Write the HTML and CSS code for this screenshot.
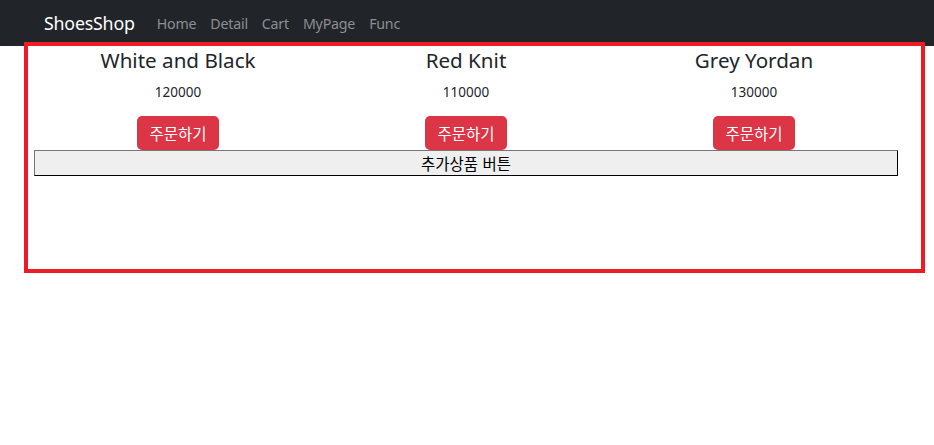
FILE: index.html
```html
<!DOCTYPE html>
<html lang="ko">
<head>
<meta charset="utf-8">
<title>ShoesShop</title>
<link rel="stylesheet" href="styles.css">
</head>
<body>
<nav class="navbar">
  <a class="brand" href="#">ShoesShop</a>
  <div class="nav-links">
    <a class="nav-link" href="#">Home</a>
    <a class="nav-link" href="#">Detail</a>
    <a class="nav-link" href="#">Cart</a>
    <a class="nav-link" href="#">MyPage</a>
    <a class="nav-link" href="#">Func</a>
  </div>
</nav>
<main class="main">
  <div class="row">
    <div class="col">
      <h4 class="title">White and Black</h4>
      <p class="price">120000</p>
      <button class="btn-order">주문하기</button>
    </div>
    <div class="col">
      <h4 class="title">Red Knit</h4>
      <p class="price">110000</p>
      <button class="btn-order">주문하기</button>
    </div>
    <div class="col">
      <h4 class="title">Grey Yordan</h4>
      <p class="price">130000</p>
      <button class="btn-order">주문하기</button>
    </div>
  </div>
  <button class="btn-more">추가상품 버튼</button>
</main>
<div class="highlight"></div>
</body>
</html>
```
FILE: styles.css
```css
html, body {
  margin: 0;
  padding: 0;
  background: #fff;
}
body {
  font-family: "Noto Sans", "Noto Sans CJK KR", sans-serif;
  color: #212529;
  position: relative;
  min-height: 445px;
}
.navbar {
  height: 46px;
  background: #212529;
  display: flex;
  align-items: center;
  padding-left: 44px;
  box-sizing: border-box;
}
.brand {
  color: #fff;
  text-decoration: none;
  font-size: 17.8px;
  margin-right: 15px;
  letter-spacing: -0.2px;
}
.nav-links {
  display: flex;
}
.nav-link {
  color: #8e8f91;
  text-decoration: none;
  font-size: 14.2px;
  padding: 0 7px;
  letter-spacing: -0.2px;
}
.main {
  width: 864px;
  margin-left: 34px;
}
.row {
  display: grid;
  grid-template-columns: repeat(3, 1fr);
}
.col {
  display: flex;
  flex-direction: column;
  align-items: center;
}
.title {
  margin: 2px 0 0;
  font-size: 20.6px;
  line-height: 25px;
  font-weight: 400;
  color: #212529;
}
.price {
  margin: 9px 0 0;
  font-size: 13.5px;
  line-height: 21px;
}
.btn-order {
  margin-top: 13px;
  height: 34px;
  padding: 0 12px;
  border: none;
  border-radius: 5px;
  background: #dc3545;
  color: #fff;
  font-family: "Noto Sans CJK KR", sans-serif;
  font-size: 15.5px;
  line-height: 34px;
}
.btn-more {
  display: block;
  width: 864px;
  height: 26px;
  margin: 0;
  padding: 0;
  background: #efefef;
  border: 1px solid;
  border-color: #767676 #000 #000 #767676;
  font-family: "Noto Sans CJK KR", sans-serif;
  font-size: 15.5px;
  line-height: 22px;
  color: #000;
}
.highlight {
  position: absolute;
  left: 24px;
  top: 42px;
  width: 901px;
  height: 231px;
  box-sizing: border-box;
  border: 4px solid #ed1c24;
  pointer-events: none;
}
```
